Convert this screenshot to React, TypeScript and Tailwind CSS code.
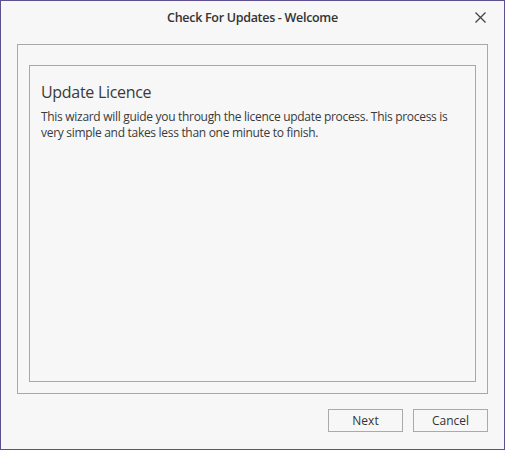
export default function App() {
  const font = { fontFamily: '"Open Sans", "Noto Sans", sans-serif' };
  return (
    <div
      className="w-[505px] h-[450px] bg-[#f7f7f7] border border-[#5e5090] flex flex-col text-[#3b3b3b]"
      style={font}
    >
      <div className="relative h-[43px] flex items-start justify-center pt-[8px]">
        <span className="text-[12.5px] font-semibold text-[#333] tracking-[-0.3px]">Check For Updates - Welcome</span>
        <svg className="absolute right-[18px] top-[11px]" width="11" height="11" viewBox="0 0 11 11">
          <path d="M0.5 0.5 L10.5 10.5 M10.5 0.5 L0.5 10.5" stroke="#444" strokeWidth="1.3" fill="none" />
        </svg>
      </div>
      <div className="mx-[16px] h-[350px] border border-[#a8a8a8] pt-[20px] px-[11px] pb-[11px] flex">
        <div className="flex-1 border border-[#a8a8a8] px-[11px] pt-[16px]">
          <div className="text-[16px] leading-[20px] text-[#3a3a3a] tracking-[-0.3px]">Update Licence</div>
          <p className="mt-[7px] text-[12px] leading-[16px] text-[#3a3a3a] tracking-[-0.3px]">
            This wizard will guide you through the licence update process. This process is very simple and takes less than one minute to finish.
          </p>
        </div>
      </div>
      <div className="flex justify-end gap-[10px] mt-[15px] mr-[16px]">
        <button className="w-[75px] h-[23px] border border-[#aaa] bg-[#f7f7f7] text-[12px] text-[#333]">Next</button>
        <button className="w-[75px] h-[23px] border border-[#aaa] bg-[#f7f7f7] text-[12px] text-[#333]">Cancel</button>
      </div>
    </div>
  );
}
